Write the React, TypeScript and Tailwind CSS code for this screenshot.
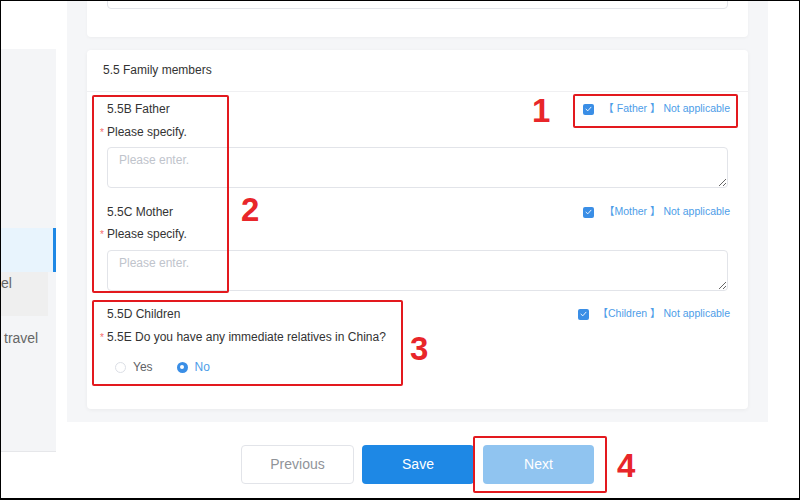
import React from 'react';

const font = "font-['Liberation_Sans','Noto_Sans_CJK_SC',Arial,sans-serif]";

interface NotApplicableProps {
  label: string;
  gap: string;
}

// blue "not applicable" checkbox on the right of each member row
const NotApplicable: React.FC<NotApplicableProps> = ({ label, gap }) => (
  <label className={`flex items-center ${gap} text-[10.5px] text-[#4d9de8] cursor-pointer`}>
    <span className="w-[11px] h-[11px] rounded-[2px] bg-[#3a8ee6] flex items-center justify-center">
      <svg width="7" height="6" viewBox="0 0 7 6" fill="none">
        <path d="M1 3.2L2.8 4.8L6 1.2" stroke="white" strokeWidth="0.9" strokeLinecap="round" strokeLinejoin="round" />
      </svg>
    </span>
    <span>{label}</span>
  </label>
);

const Required: React.FC<{ text: string }> = ({ text }) => (
  <div className="flex items-center h-[20px] -ml-[7px] text-[12px] text-[#333]">
    <span className="w-[7px] text-[10px] text-[#f56c6c] self-start mt-[3px]">*</span>
    <span>{text}</span>
  </div>
);

const Area: React.FC = () => (
  <textarea
    placeholder="Please enter."
    className="block w-full h-[41px] border border-[#e2e4e9] rounded-[4px] pl-[11px] pt-[3px] text-[12px] leading-[18px] text-[#333] placeholder:text-[#c0c4cc] outline-none resize-y"
  />
);

const Mark: React.FC<{ className: string }> = ({ className }) => (
  <div className={`absolute border-2 border-[#e3191e] rounded-[2px] ${className}`} />
);

const Num: React.FC<{ n: string; className: string }> = ({ n, className }) => (
  <div className={`absolute text-[33px] font-bold leading-none text-[#e8262a] ${className}`}>{n}</div>
);

export default function App() {
  return (
    <div className={`relative w-[800px] h-[500px] overflow-hidden bg-white border border-b-2 border-black ${font}`}>
      <div className="flex h-full">
        {/* side menu, clipped on the left */}
        <div className="w-[55px] pt-[48px]">
          <div className="h-[403px] bg-[#f4f5f7] border-b border-[#e6e7ea] pt-[179px] text-[14px] text-[#666]">
            <div className="h-[44px] bg-[#e8f4fd] border-r-[3px] border-[#1e88e5]" />
            <div className="h-[44px] w-[47px] bg-[#efefef] pt-[1px]">el</div>
            <div className="pl-[3px] pt-[12px]">travel</div>
          </div>
        </div>

        <div className="w-[11px]" />

        <div className="w-[701px] flex flex-col">
          <div className="h-[421px] bg-[#f5f6f8] px-5 flex flex-col">
            {/* previous section, scrolled off */}
            <div className="h-[36px] bg-white rounded-b-[4px] shadow-[0_1px_3px_rgba(0,0,0,0.04)] overflow-hidden flex flex-col justify-end px-5 pb-[28px]">
              <div className="h-[40px] shrink-0 border border-[#e2e4e9] rounded-[4px]" />
            </div>

            <div className="mt-[13px] h-[359px] bg-white rounded-[4px] shadow-[0_1px_4px_rgba(0,0,0,0.05)]">
              <div className="h-[42px] px-4 pb-[2px] flex items-center text-[12px] text-[#333] border-b border-[#f0f0f2]">
                5.5 Family members
              </div>

              <div className="px-5">
                <div className="mt-[7px] h-[20px] flex items-center justify-between">
                  <span className="text-[12px] text-[#333]">5.5B Father</span>
                  <div className="-mr-[2px]">
                    <NotApplicable label="【 Father 】 Not applicable" gap="gap-[9px]" />
                  </div>
                </div>
                <div className="mt-[3px]">
                  <Required text="Please specify." />
                </div>
                <div className="mt-[5px]">
                  <Area />
                </div>

                <div className="mt-[14px] h-[20px] flex items-center justify-between">
                  <span className="text-[12px] text-[#333]">5.5C Mother</span>
                  <div className="-mr-[2px]">
                    <NotApplicable label="【Mother 】 Not applicable" gap="gap-[10px]" />
                  </div>
                </div>
                <div className="mt-[2px]">
                  <Required text="Please specify." />
                </div>
                <div className="mt-[6px]">
                  <Area />
                </div>

                <div className="mt-[13px] h-[20px] flex items-center justify-between">
                  <span className="text-[12px] text-[#333]">5.5D Children</span>
                  <div className="-mr-[2px]">
                    <NotApplicable label="【Children 】 Not applicable" gap="gap-[9px]" />
                  </div>
                </div>
                <div className="mt-[3px]">
                  <Required text="5.5E Do you have any immediate relatives in China?" />
                </div>

                <div className="mt-[10px] h-[20px] flex items-center pl-[8px] text-[12px]">
                  <span className="w-[11px] h-[11px] rounded-full border border-[#dcdfe6] bg-white" />
                  <span className="ml-[7px] text-[#606266]">Yes</span>
                  <span className="ml-[24px] w-[11px] h-[11px] rounded-full bg-[#3a8ee6] flex items-center justify-center">
                    <span className="w-[4px] h-[4px] rounded-full bg-white" />
                  </span>
                  <span className="ml-[7px] text-[#4d9de8]">No</span>
                </div>
              </div>
            </div>
          </div>

          <div className="mt-[23px] flex justify-center text-[14px]">
            <button className="w-[113px] h-[39px] border border-[#e2e4e9] rounded-[4px] bg-white text-[#909399]">
              Previous
            </button>
            <button className="ml-2 w-[112px] h-[39px] rounded-[4px] bg-[#1e88e5] text-white">
              Save
            </button>
            <button className="ml-[9px] w-[111px] h-[39px] rounded-[4px] bg-[#90c4f0] text-white">
              Next
            </button>
          </div>
        </div>
      </div>

      {/* tutorial annotations */}
      <Mark className="left-[572px] top-[93px] w-[165px] h-[34px]" />
      <Mark className="left-[91px] top-[94px] w-[137px] h-[198px]" />
      <Mark className="left-[91px] top-[299px] w-[311px] h-[86px]" />
      <Mark className="left-[472px] top-[435px] w-[134px] h-[57px]" />
      <Num n="1" className="left-[531px] top-[93px]" />
      <Num n="2" className="left-[240px] top-[192px]" />
      <Num n="3" className="left-[409px] top-[331px]" />
      <Num n="4" className="left-[616px] top-[448px]" />
    </div>
  );
}
